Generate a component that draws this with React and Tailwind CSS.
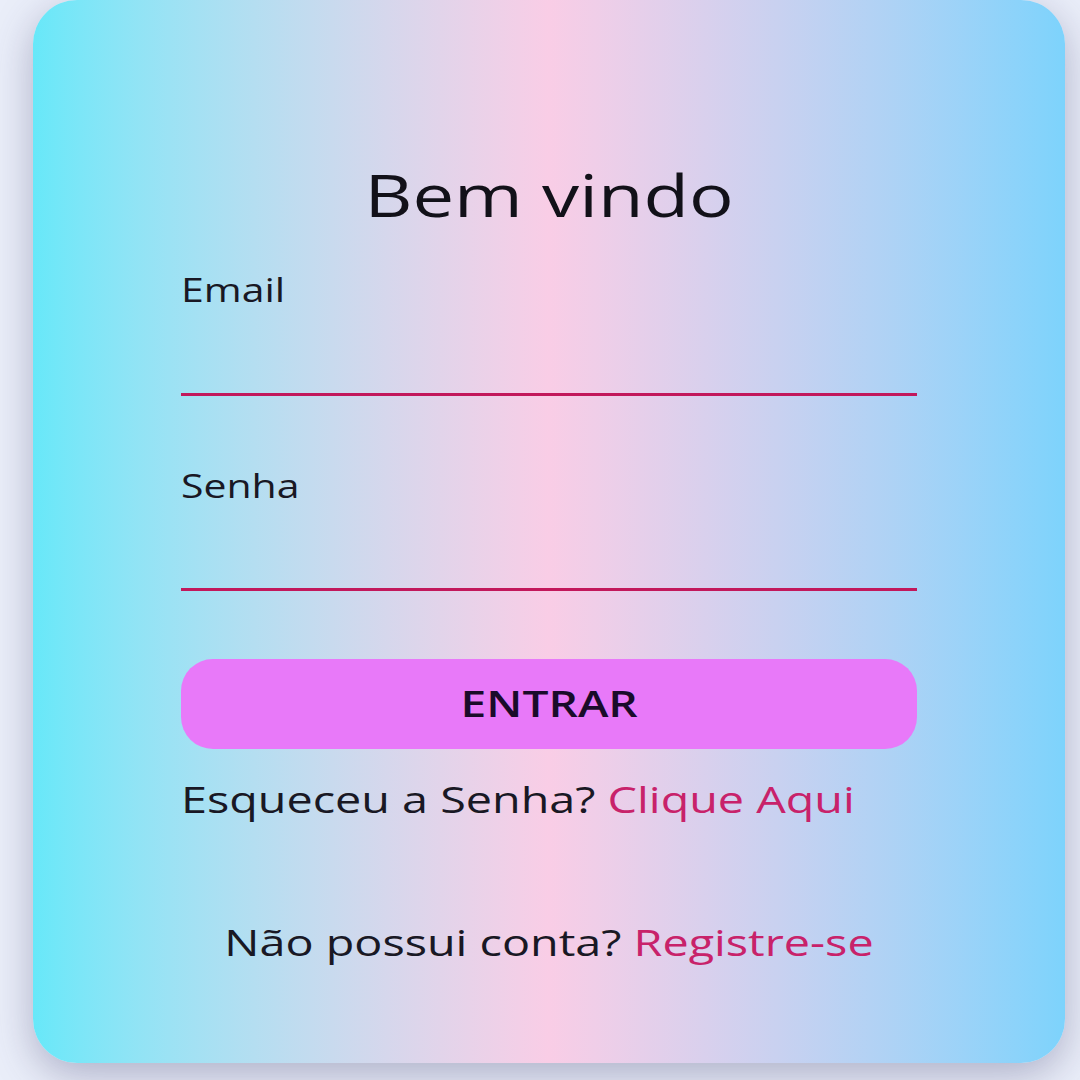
export default function App() {
  return (
    <div className="min-h-[1080px] w-[1080px] overflow-hidden bg-[#eaeef9] font-['Open_Sans',sans-serif] text-[#191824]">
      <div className="ml-[33px] h-[1063px] w-[1032px] rounded-[44px] bg-linear-to-r from-[#67e8f9] via-[#f9cde6] to-[#7dd3fc] shadow-[0_12px_40px_rgba(60,60,110,0.35)]">
        <div className="flex flex-col px-[148px] pt-[166px]">
          <h1 className="scale-x-[1.28] text-center text-[58px] leading-none font-normal text-[#121119]">Bem vindo</h1>

          <label className="mt-[50px] origin-left scale-x-[1.28] text-[32px] leading-none">Email</label>
          <input
            type="email"
            className="h-[90px] w-full border-0 border-b-[3px] border-[#c2185b] bg-transparent text-[30px] outline-none"
          />

          <label className="mt-[74px] origin-left scale-x-[1.28] text-[32px] leading-none">Senha</label>
          <input
            type="password"
            className="h-[89px] w-full border-0 border-b-[3px] border-[#c2185b] bg-transparent text-[30px] outline-none"
          />

          <button className="mt-[68px] flex h-[90px] w-full items-center justify-center rounded-[32px] bg-[#e879f9]">
            <span className="scale-x-[1.28] text-[36px] leading-none font-semibold text-[#1a0b2a]">ENTRAR</span>
          </button>

          <p className="mt-[32px] origin-left scale-x-[1.28] text-[36.5px] leading-none">
            Esqueceu a Senha? <a href="#" className="text-[#c8226a]">Clique Aqui</a>
          </p>

          <p className="mt-[106px] scale-x-[1.28] text-center text-[36.5px] leading-none">
            Não possui conta? <a href="#" className="text-[#c8226a]">Registre-se</a>
          </p>
        </div>
      </div>
    </div>
  );
}
